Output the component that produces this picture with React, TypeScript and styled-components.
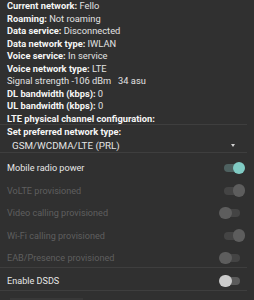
import React from "react";
import styled, { createGlobalStyle } from "styled-components";

const Global = createGlobalStyle`
  html, body { margin: 0; padding: 0; background: #303030; }
  body { font-family: Roboto, "Noto Sans", sans-serif; width: 254px; height: 300px; overflow: hidden; }
`;

const Page = styled.div`
  display: flex;
  flex-direction: column;
  width: 254px;
`;

const InfoList = styled.div`
  display: flex;
  flex-direction: column;
  padding: 0 7px;
  margin-bottom: -1px;
`;

const InfoLine = styled.div`
  font-size: 9.3px;
  line-height: 12.5px;
  height: 12.5px;
  color: #e2e2e2;
  white-space: nowrap;
`;

const Label = styled.span<{ $bold?: boolean }>`
  font-weight: ${(p) => (p.$bold === false ? 400 : 700)};
  color: ${(p) => (p.$bold === false ? "#e2e2e2" : "#f6f6f6")};
`;

const Divider = styled.div`
  height: 1px;
  background: #3e3e3e;
  margin-right: 7px;
`;

const SectionTitle = styled.div`
  font-size: 9.3px;
  font-weight: 700;
  color: #f6f6f6;
  padding: 1px 7px 0;
  line-height: 12.5px;
`;

const Dropdown = styled.div`
  display: flex;
  align-items: center;
  justify-content: space-between;
  height: 13.5px;
  padding: 0 19.5px 0 12px;
  font-size: 9.8px;
  color: #e4e4e4;
`;

const Arrow = styled.span`
  width: 0;
  height: 0;
  border-left: 2.5px solid transparent;
  border-right: 2.5px solid transparent;
  border-top: 3px solid #d0d0d0;
`;

const SwitchGroup = styled.div`
  display: flex;
  flex-direction: column;
  padding-top: 3.75px;
  margin-bottom: -2.25px;
`;

const SwitchRow = styled.div<{ $disabled?: boolean; $top?: number; $h?: number }>`
  display: flex;
  align-items: center;
  justify-content: space-between;
  height: ${(p) => p.$h ?? 22.5}px;
  box-sizing: border-box;
  padding: ${(p) => p.$top ?? 0}px 9px 0 7px;
  font-size: 9.1px;
  color: ${(p) => (p.$disabled ? "#5f5f5f" : "#e6e6e6")};
`;

const SwitchBox = styled.span`
  position: relative;
  display: inline-block;
  width: 26px;
  height: 12.5px;
  flex: none;
`;

const Track = styled.span<{ $color: string }>`
  position: absolute;
  left: 5px;
  top: 2.25px;
  width: 16px;
  height: 8px;
  border-radius: 4px;
  background: ${(p) => p.$color};
`;

const Thumb = styled.span<{ $on: boolean; $color: string }>`
  position: absolute;
  top: 0;
  left: ${(p) => (p.$on ? "13.5px" : "0")};
  width: 12.5px;
  height: 12.5px;
  border-radius: 50%;
  background: ${(p) => p.$color};
`;

const BottomHint = styled.div`
  margin: 7px 0 0 10px;
  width: 73px;
  height: 2px;
  background: #383838;
`;

function Switch({ on, disabled }: { on: boolean; disabled?: boolean }) {
  let track = "#5b5b5b";
  let thumb = "#cbcbcb";
  if (on && !disabled) {
    track = "#4e6160";
    thumb = "#80cbc4";
  } else if (disabled) {
    track = "#444444";
    thumb = "#5d5d5d";
  }
  return (
    <SwitchBox>
      <Track $color={track} />
      <Thumb $on={on} $color={thumb} />
    </SwitchBox>
  );
}

const info: [string, string, boolean?][] = [
  ["Current network:", " Fello"],
  ["Roaming:", " Not roaming"],
  ["Data service:", " Disconnected"],
  ["Data network type:", " IWLAN"],
  ["Voice service:", " In service"],
  ["Voice network type:", " LTE"],
  ["Signal strength", " -106 dBm\u00a0\u00a0\u00a034 asu", false],
  ["DL bandwidth (kbps):", " 0"],
  ["UL bandwidth (kbps):", " 0"],
  ["LTE physical channel configuration:", ""],
];

const toggles: { label: string; on: boolean }[] = [
  { label: "VoLTE provisioned", on: true },
  { label: "Video calling provisioned", on: false },
  { label: "Wi-Fi calling provisioned", on: true },
  { label: "EAB/Presence provisioned", on: false },
];

export default function App() {
  return (
    <Page>
      <Global />
      <InfoList>
        {info.map(([l, v, b]) => (
          <InfoLine key={l}>
            <Label $bold={b}>{l}</Label>
            {v}
          </InfoLine>
        ))}
      </InfoList>
      <Divider />
      <SectionTitle>Set preferred network type:</SectionTitle>
      <Dropdown>
        <span>GSM/WCDMA/LTE (PRL)</span>
        <Arrow />
      </Dropdown>
      <Divider />
      <SwitchGroup>
        <SwitchRow>
          Mobile radio power
          <Switch on />
        </SwitchRow>
        {toggles.map((t) => (
          <SwitchRow key={t.label} $disabled>
            {t.label}
            <Switch on={t.on} disabled />
          </SwitchRow>
        ))}
      </SwitchGroup>
      <Divider />
      <SwitchRow $top={4} $h={22}>
        Enable DSDS
        <Switch on={false} />
      </SwitchRow>
      <Divider />
      <BottomHint />
    </Page>
  );
}
